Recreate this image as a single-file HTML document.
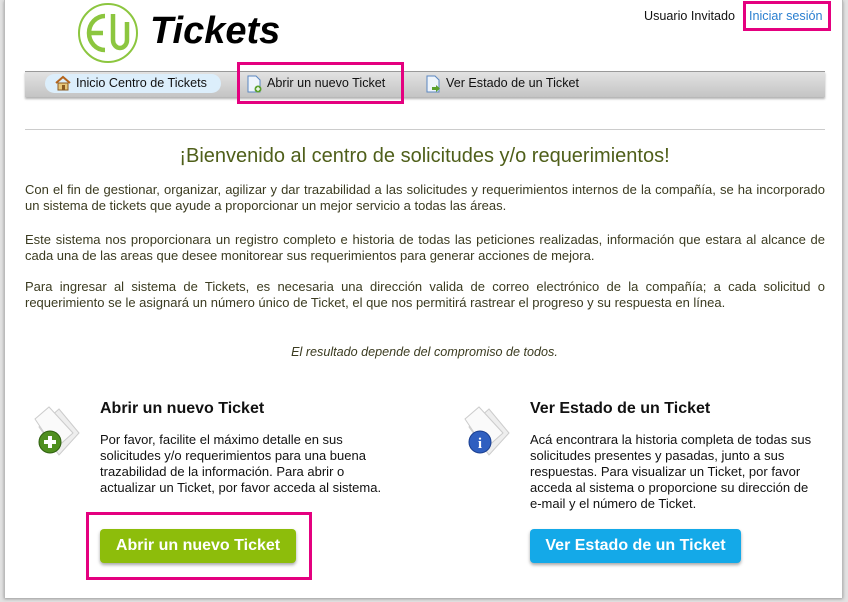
<!DOCTYPE html>
<html><head><meta charset="utf-8"><style>
*{margin:0;padding:0;box-sizing:border-box}
html,body{width:848px;height:602px;overflow:hidden;background:#e2e2e2;font-family:"Liberation Sans",Arial,sans-serif}
#page{position:absolute;left:4px;top:0;width:839px;height:598px;background:#fff;border-left:1px solid #bbb;border-right:1px solid #bbb;box-shadow:0 1px 3px #999}
.a{position:absolute}
.mag{position:absolute;border:3px solid #e4007f}
p.t{position:absolute;left:20px;width:800px;font-size:13px;line-height:16px;color:#3b3b20;text-align:justify}
.body{font-size:13px;line-height:16px;color:#111}
.btn{position:absolute;height:34px;border-radius:4px;color:#fff;font-weight:bold;font-size:16px;text-align:center;line-height:34px;box-shadow:0 2px 3px rgba(0,0,0,.35)}
</style></head><body>
<div id="page">
<svg class="a" style="left:70px;top:2px" width="64" height="64" viewBox="0 0 64 64">
<circle cx="33" cy="31" r="29" fill="none" stroke="#8cc63f" stroke-width="2"/>
<path d="M30 14 A16 17 0 0 0 30 48 M15 31 H28" fill="none" stroke="#8cc63f" stroke-width="4.5"/>
<path d="M38 12 V38 A7 8 0 0 0 52 38 V20" fill="none" stroke="#8cc63f" stroke-width="4.5"/>
</svg>
<div class="a" style="left:145px;top:10px;font-size:38px;font-weight:bold;font-style:italic;color:#000">Tickets</div>
<div class="a" style="left:639px;top:9px;font-size:12.6px;color:#111">Usuario Invitado</div>
<div class="a" style="left:744px;top:9px;font-size:12.6px;color:#2a7fd0">Iniciar sesión</div>
<div class="mag" style="left:738px;top:1px;width:88px;height:30px"></div>
<div class="a" style="left:20px;top:71px;width:800px;height:26px;background:linear-gradient(#e2e2e2,#c4c4c4);border-top:1px solid #999;box-shadow:0 2px 2px rgba(0,0,0,.3)"></div>
<div class="a" style="left:40px;top:74px;width:176px;height:19px;border-radius:10px;background:#dceefb"></div>
<svg class="a" style="left:50px;top:75px" width="16" height="16"><path d="M1 8 L8 2 L15 8" fill="none" stroke="#b5651d" stroke-width="2"/><rect x="3" y="8" width="10" height="7" fill="#e8c77a" stroke="#8a5a20"/><rect x="7" y="10" width="3" height="5" fill="#8a5a20"/></svg>
<div class="a" style="left:71px;top:76px;font-size:12.6px;color:#111">Inicio Centro de Tickets</div>
<svg class="a" style="left:241px;top:75px" width="16" height="18"><path d="M2 1 H10 L14 5 V17 H2 Z" fill="#eef4fb" stroke="#5a86c0"/><circle cx="12" cy="14" r="3.5" fill="#5aa02c"/><path d="M10 14h4M12 12v4" stroke="#fff" stroke-width="1.3"/></svg>
<div class="a" style="left:262px;top:76px;font-size:12.6px;color:#111">Abrir un nuevo Ticket</div>
<div class="mag" style="left:232px;top:62px;width:167px;height:42px"></div>
<svg class="a" style="left:420px;top:75px" width="16" height="18"><path d="M2 1 H10 L14 5 V17 H2 Z" fill="#eef4fb" stroke="#5a86c0"/><path d="M7 12h4v-2l4 3.5-4 3.5v-2H7z" fill="#5aa02c"/></svg>
<div class="a" style="left:441px;top:76px;font-size:12.6px;color:#111">Ver Estado de un Ticket</div>
<div class="a" style="left:20px;top:129px;width:800px;height:1px;background:#ccc"></div>
<div class="a" style="left:0;width:839px;top:145px;text-align:center;font-size:20px;color:#4f5f1a">¡Bienvenido al centro de solicitudes y/o requerimientos!</div>
<p class="t" style="top:182px">Con el fin de gestionar, organizar, agilizar y dar trazabilidad a las solicitudes y requerimientos internos de la compañía, se ha incorporado un sistema de tickets que ayude a proporcionar un mejor servicio a todas las áreas.</p>
<p class="t" style="top:232px">Este sistema nos proporcionara un registro completo e historia de todas las peticiones realizadas, información que estara al alcance de cada una de las areas que desee monitorear sus requerimientos para generar acciones de mejora.</p>
<p class="t" style="top:279px">Para ingresar al sistema de Tickets, es necesaria una dirección valida de correo electrónico de la compañía; a cada solicitud o requerimiento se le asignará un número único de Ticket, el que nos permitirá rastrear el progreso y su respuesta en línea.</p>
<div class="a" style="left:0;width:839px;top:345px;text-align:center;font-size:12.6px;font-style:italic;color:#3b3b20">El resultado depende del compromiso de todos.</div>

<svg class="a" style="left:24px;top:405px" width="60" height="60"><path d="M10 22 L30 4 L50 28 L30 50 Z" fill="#eee" stroke="#ccc"/><path d="M6 14 L20 2 L44 28 L26 44 Z" fill="#fafafa" stroke="#ccc"/><circle cx="21" cy="37" r="11" fill="#4f8f1f" stroke="#2f6010"/><path d="M15 37h12M21 31v12" stroke="#fff" stroke-width="4"/></svg>
<div class="a" style="left:95px;top:400px;font-size:16px;font-weight:bold;color:#111">Abrir un nuevo Ticket</div>
<div class="a body" style="left:95px;top:432px;width:290px">Por favor, facilite el máximo detalle en sus solicitudes y/o requerimientos para una buena trazabilidad de la información. Para abrir o actualizar un Ticket, por favor acceda al sistema.</div>
<div class="btn" style="left:95px;top:529px;width:196px;background:#8dbd0b">Abrir un nuevo Ticket</div>
<div class="mag" style="left:81px;top:512px;width:226px;height:68px"></div>

<svg class="a" style="left:454px;top:405px" width="60" height="60"><path d="M10 22 L30 4 L50 28 L30 50 Z" fill="#eee" stroke="#ccc"/><path d="M6 14 L20 2 L44 28 L26 44 Z" fill="#fafafa" stroke="#ccc"/><circle cx="21" cy="37" r="11" fill="#2f5fc0" stroke="#1a3f90"/><text x="21" y="43" text-anchor="middle" font-family="Liberation Serif" font-weight="bold" font-size="15" fill="#fff">i</text></svg>
<div class="a" style="left:525px;top:400px;font-size:16px;font-weight:bold;color:#111">Ver Estado de un Ticket</div>
<div class="a body" style="left:525px;top:432px;width:290px">Acá encontrara la historia completa de todas sus solicitudes presentes y pasadas, junto a sus respuestas. Para visualizar un Ticket, por favor acceda al sistema o proporcione su dirección de e-mail y el número de Ticket.</div>
<div class="btn" style="left:525px;top:529px;width:211px;background:#14a9e8">Ver Estado de un Ticket</div>
</div>
</body></html>
